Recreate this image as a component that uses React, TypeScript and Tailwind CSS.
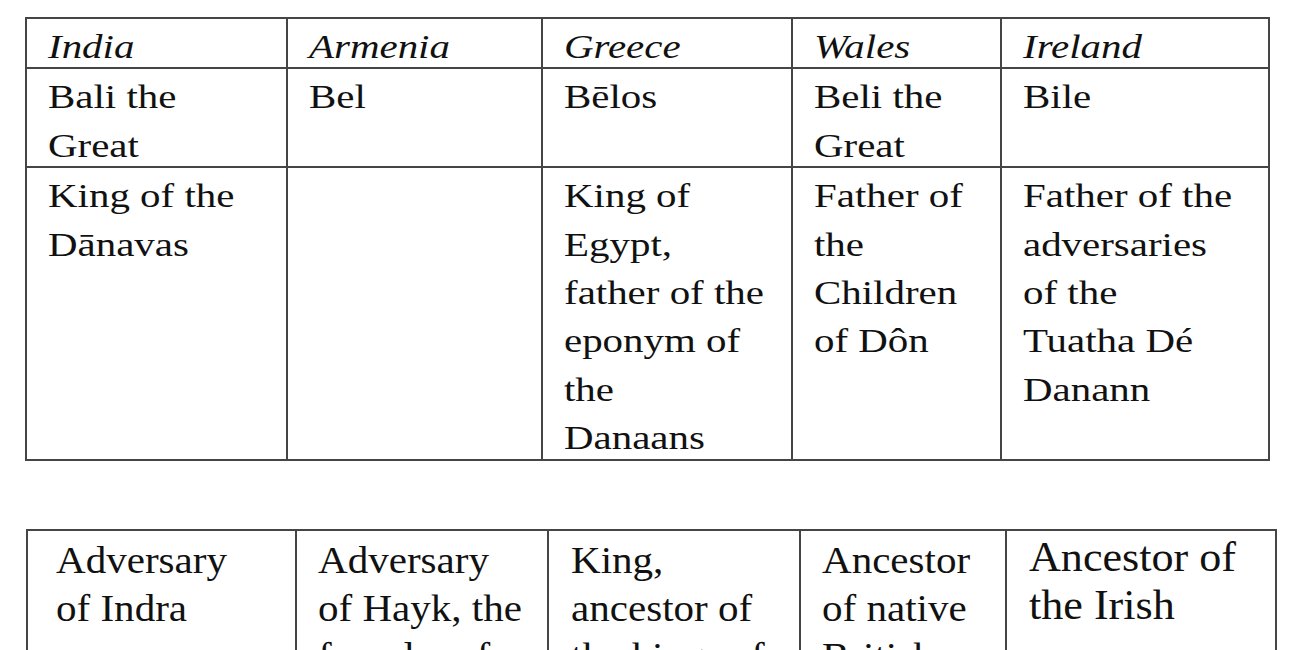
import React from 'react';

type Cell = string[];

const topHeaders = ['India', 'Armenia', 'Greece', 'Wales', 'Ireland'];

const topRows: Cell[][] = [
  [['Bali the', 'Great'], ['Bel'], ['Bēlos'], ['Beli the', 'Great'], ['Bile']],
  [
    ['King of the', 'Dānavas'],
    [],
    ['King of', 'Egypt,', 'father of the', 'eponym of', 'the', 'Danaans'],
    ['Father of', 'the', 'Children', 'of Dôn'],
    ['Father of the', 'adversaries', 'of the', 'Tuatha Dé', 'Danann'],
  ],
];

const bottomRow: Cell[] = [
  ['Adversary', 'of Indra'],
  ['Adversary', 'of Hayk, the', 'founder of', 'the Armenian', 'nation'],
  ['King,', 'ancestor of', 'the kings of', 'Britain'],
  ['Ancestor', 'of native', 'British', 'dynasties'],
  ['Ancestor of', 'the Irish'],
];

const Lines: React.FC<{ lines: Cell; italic?: boolean; big?: boolean }> = ({ lines, italic, big }) => (
  <>
    {lines.map((line, i) => (
      <span
        key={i}
        className={
          big
            ? 'block origin-left scale-x-[1.05] translate-y-[2px] whitespace-nowrap text-[42px] leading-[48px]'
            : italic
              ? 'block origin-left scale-x-[1.24] translate-y-[4px] whitespace-nowrap italic'
              : 'block origin-left scale-x-[1.24] translate-y-[4px] whitespace-nowrap'
        }
      >
        {line}
      </span>
    ))}
  </>
);

const BottomLines: React.FC<{ lines: Cell }> = ({ lines }) => (
  <>
    {lines.map((line, i) => (
      <span key={i} className="block origin-left scale-x-[1.08] translate-y-[5px] whitespace-nowrap">
        {line}
      </span>
    ))}
  </>
);

export default function App() {
  return (
    <div className="min-h-[650px] bg-white font-['Liberation_Serif','Times_New_Roman',serif] text-[#111111]">
      <div className="pt-[17px] pl-[25px]">
        <div className="grid grid-cols-[261px_255px_250px_209px_268px] border-l-2 border-t-2 border-[#454545] w-fit text-[33px] leading-[48.4px]">
          {topHeaders.map((h) => (
            <div key={h} className="border-r-2 border-b-2 border-[#454545] pl-[21px]">
              <Lines lines={[h]} italic />
            </div>
          ))}
          {topRows.map((row, r) =>
            row.map((cell, c) => (
              <div key={`${r}-${c}`} className="border-r-2 border-b-2 border-[#454545] pl-[21px]">
                <Lines lines={cell} />
              </div>
            )),
          )}
        </div>
      </div>

      <div className="pt-[68px] pl-[26px]">
        <div className="grid grid-cols-[269px_252px_252px_206px_270px] border-l-2 border-t-2 border-[#454545] w-fit text-[38px] leading-[48px]">
          <div className="border-r-2 border-b-2 border-[#454545] pl-[28px]">
            <BottomLines lines={bottomRow[0]} />
          </div>
          <div className="border-r-2 border-b-2 border-[#454545] pl-[21px]">
            <BottomLines lines={bottomRow[1]} />
          </div>
          <div className="border-r-2 border-b-2 border-[#454545] pl-[22px]">
            <BottomLines lines={bottomRow[2]} />
          </div>
          <div className="border-r-2 border-b-2 border-[#454545] pl-[21px]">
            <BottomLines lines={bottomRow[3]} />
          </div>
          <div className="border-r-2 border-b-2 border-[#454545] pl-[22px]">
            <Lines lines={bottomRow[4]} big />
          </div>
        </div>
      </div>
    </div>
  );
}
